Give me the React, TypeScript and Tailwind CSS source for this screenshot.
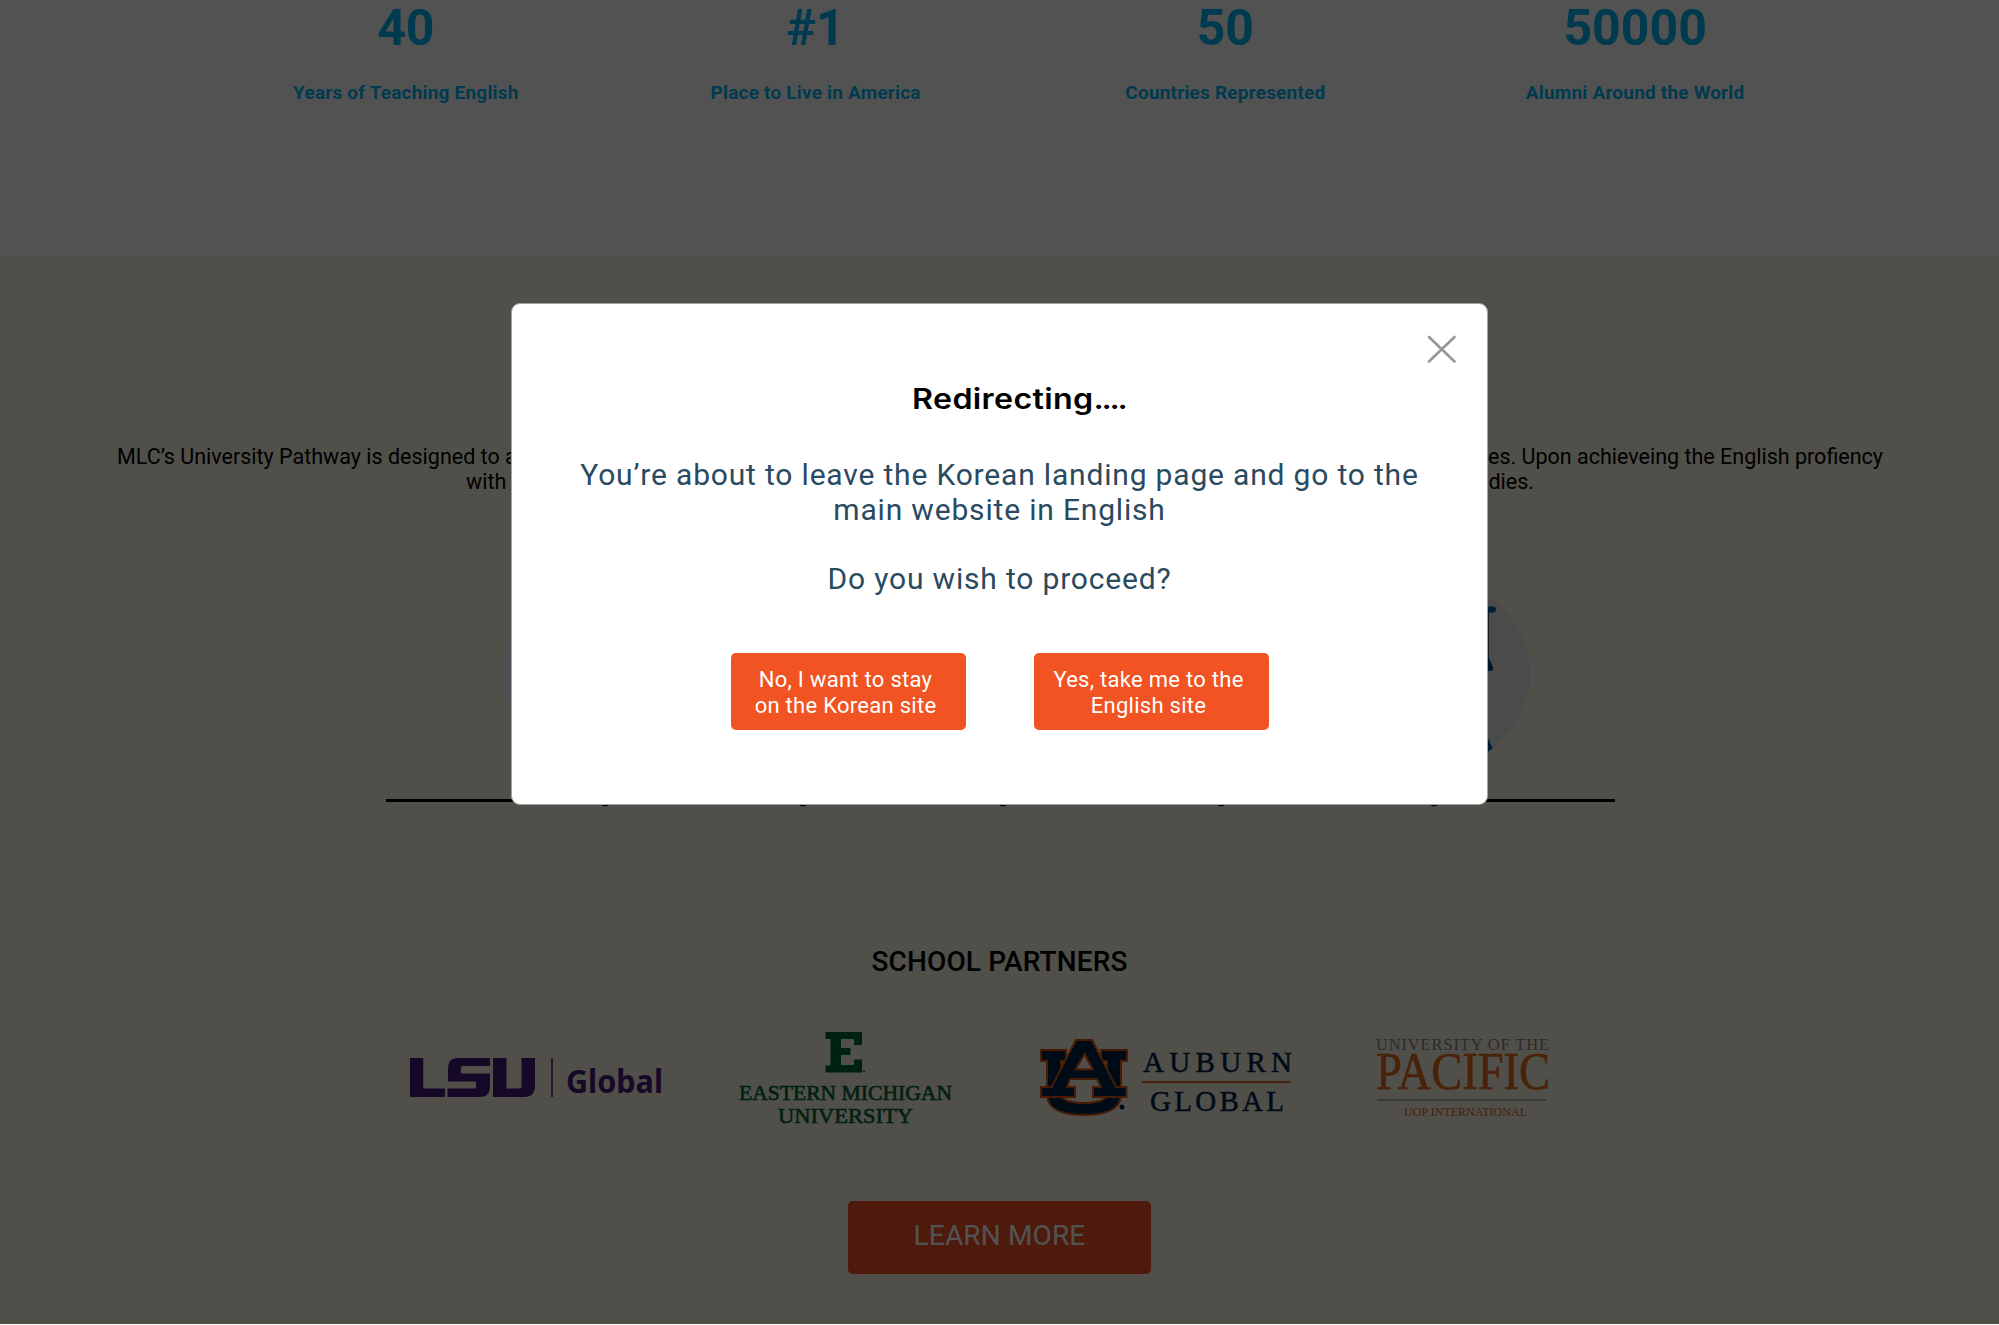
import React from "react";

const stats = [
  { value: "40", label: "Years of Teaching English" },
  { value: "#1", label: "Place to Live in America" },
  { value: "50", label: "Countries Represented" },
  { value: "50000", label: "Alumni Around the World" },
];

function Stats() {
  return (
    <section className="h-[257px] bg-white pl-[201px]">
      <div className="grid w-[1639px] grid-cols-4 text-center font-bold text-[#00b5f5]">
        {stats.map((s) => (
          <div key={s.label}>
            <div className="h-[56px] text-[50px] leading-[56px]">{s.value}</div>
            <div className="mt-[25px] text-[19px] leading-[24px] tracking-[0.2px]">{s.label}</div>
          </div>
        ))}
      </div>
    </section>
  );
}

function Intro() {
  return (
    <div className="flex flex-col items-center text-[21.5px] leading-[25px] text-black">
      <div className="ml-px flex w-[1766px] justify-between whitespace-nowrap">
        <span>MLC’s University Pathway is designed to a</span>
        <span>tes. Upon achieveing the English profiency</span>
      </div>
      <div className="ml-px flex w-[1068px] justify-between">
        <span>with</span>
        <span>dies.</span>
      </div>
    </div>
  );
}

function Steps() {
  return (
    <div className="ml-[386px] w-[1229px]">
      <div className="flex justify-between pl-[116px] pr-[85px]">
        <div className="size-[186px] rounded-full bg-[#f7f7ff]" />
        <div className="size-[186px] overflow-hidden rounded-full bg-[#e8e9ea]">
          <svg viewBox="0 0 186 186" className="size-full" fill="none">
            <path d="M90 28.5H149" stroke="#00629b" strokeWidth="6" strokeLinecap="round" />
            <path d="M143.5 30V84" stroke="#00304d" strokeWidth="2.500" />
            <path d="M142 71L149 86Q150 90 146 90H138Z" fill="#004a80" />
            <path d="M142 153L149 168L140 175Z" fill="#00629b" />
          </svg>
        </div>
      </div>
      <div className="mt-[32px] h-[3px] bg-black" />
      <div className="relative h-[5px]">
        {/* descenders of the step captions */}
        <svg className="absolute left-0 top-0" width="1229" height="5" fill="#000">
          {[219, 417, 617, 835, 1048].map((x) => (
            <ellipse key={x} cx={x} cy={2} rx={3.5} ry={2.3} />
          ))}
        </svg>
      </div>
    </div>
  );
}

function LsuLogo() {
  return (
    <svg width="256" height="41" viewBox="409 1057 256 41" fill="#461d7c">
      <path d="M410 1058H423.3V1088.5H445V1097H410Z" />
      <path d="M457 1058H490V1066H462Q461 1066 461 1068V1072.5Q461 1073.5 462 1073.5H490V1086Q490 1097 480 1097H447.500V1088.500H475Q476 1088.500 476 1087.500V1082.500Q476 1081.500 475 1081.500H448V1069Q448 1058 457 1058Z" />
      <path d="M493 1058H506.500V1088.500H519Q521.500 1088.500 521.500 1086V1058H535V1086Q535 1097 524 1097H493Z" />
      <path d="M551.2 1058H552.800V1097H551.200Z" />
      <text x="566" y="1092.500" fontFamily="'Noto Sans', sans-serif" fontWeight="700" fontSize="33" textLength="97" lengthAdjust="spacingAndGlyphs">Global</text>
    </svg>
  );
}

function EasternMichiganLogo() {
  return (
    <svg width="216" height="96" viewBox="737 1030 216 96" fill="#006633">
      <path d="M825.500 1032H862V1045H854V1039H841V1048H850.500V1055H841V1065H854V1059.500H862V1072.500H825.500V1065.500H830.500V1039H825.500Z" />
      <path d="M863 1070.500h2v1.500h-2z" />
      <g fontFamily="'Liberation Serif', serif" fontSize="21" stroke="#006633" strokeWidth="0.6">
        <text x="739" y="1099.500" textLength="213" lengthAdjust="spacingAndGlyphs">EASTERN MICHIGAN</text>
        <text x="778" y="1122.800" textLength="135" lengthAdjust="spacingAndGlyphs">UNIVERSITY</text>
      </g>
    </svg>
  );
}

function AuburnLogo() {
  return (
    <svg width="254" height="80" viewBox="1039 1037 254 80">
      <g fill="#03244d" stroke="#dd550c" strokeWidth="2" strokeLinejoin="miter">
        <path d="M1041 1050H1066V1061H1061V1096Q1065 1103 1084 1103Q1103 1103 1107 1096V1061H1101V1050H1127V1061H1121V1096Q1119 1115 1084 1115Q1049 1115 1047 1096V1061H1041Z" />
        <path fillRule="evenodd" d="M1076 1040H1092L1116 1087H1126.500V1097H1093V1087H1101L1097 1079H1070L1067 1087H1075V1097H1041V1087H1051.500ZM1084.500 1054L1075.500 1069.500H1093Z" />
      </g>
      <circle cx="1122" cy="1107" r="2.500" fill="#03244d" />
      <path d="M1142 1081.200H1291V1083H1142Z" fill="#dd550c" />
      <g fill="#03244d" fontFamily="'Liberation Serif', serif" fontSize="29" stroke="#03244d" strokeWidth="0.5">
        <text x="1143" y="1071.500" textLength="149">AUBURN</text>
        <text x="1150" y="1110.500" textLength="134">GLOBAL</text>
      </g>
    </svg>
  );
}

function PacificLogo() {
  return (
    <svg width="176" height="84" viewBox="1375 1035 176 84" fontFamily="'Liberation Serif', serif">
      <text x="1376" y="1049.500" fontSize="16.500" fill="#858585" textLength="173">UNIVERSITY OF THE</text>
      <text x="1376" y="1088.700" fontSize="52" fill="#e56a1e" stroke="#e56a1e" strokeWidth="0.6" textLength="174" lengthAdjust="spacingAndGlyphs">PACIFIC</text>
      <path d="M1377 1099.200H1546V1100.500H1377Z" fill="#8a8a8a" />
      <text x="1404" y="1116" fontSize="13.500" fill="#e56a1e" textLength="123" lengthAdjust="spacingAndGlyphs">UOP INTERNATIONAL</text>
    </svg>
  );
}

function Pathway() {
  return (
    <section className="h-[1067px] bg-[#f7f4e4] pt-[187px]">
      <Intro />
      <div className="mt-[87px]">
        <Steps />
      </div>
      <h2 className="mt-[138px] text-center text-[28px] font-medium leading-[34px] tracking-[0.13px] text-black">
        SCHOOL PARTNERS
      </h2>
      <div className="mt-[51px] flex h-[96px] pl-[409px]">
        <div className="mt-[27px]"><LsuLogo /></div>
        <div className="ml-[72px]"><EasternMichiganLogo /></div>
        <div className="ml-[86px] mt-[7px]"><AuburnLogo /></div>
        <div className="ml-[82px] mt-[5px]"><PacificLogo /></div>
      </div>
      <button className="mx-auto mt-[75px] block h-[73px] w-[303px] rounded-[5px] bg-[#f05323] pb-[4px] text-[28px] leading-[69px] tracking-[0.15px] text-white">
        LEARN MORE
      </button>
    </section>
  );
}

function ConfirmButton({ children }: { children: React.ReactNode }) {
  return (
    <button className="h-[77px] w-[235px] rounded-[5px] bg-[#f15323] pr-[6px] pt-[3px] text-center text-[22px] leading-[26px] tracking-[0.28px] whitespace-nowrap text-white">
      {children}
    </button>
  );
}

function RedirectDialog() {
  return (
    <div className="fixed inset-x-0 top-0 flex h-[1324px] items-start justify-center bg-black/68 pt-[303px]">
      <div role="dialog" className="relative h-[502px] w-[977px] rounded-[9px] border-[1.5px] border-[#a3a3a3] bg-white">
        <button aria-label="Close" className="absolute right-[29px] top-[30px]">
          <svg width="32" height="30" viewBox="0 0 32 30" stroke="#969696" strokeWidth="2.600" strokeLinecap="round">
            <path d="M3 3L28.500 27.500M28.500 3L3 27.500" />
          </svg>
        </button>
        <h1 className="ml-[39px] mt-[77px] text-center font-[Inter] text-[28px] font-semibold leading-[36px] text-black">
          <span className="inline-block scale-x-[1.15] tracking-[0.3px]">
            Redirecting<span className="tracking-[-2px]">....</span>
          </span>
        </h1>
        <p className="mt-[41px] text-center text-[30px] leading-[34.700px] tracking-[0.82px] text-[#2a4a5f]">
          You’re about to leave the Korean landing page and go to the
          <br />
          main website in English
          <br />
          <br />
          Do you wish to proceed?
        </p>
        <div className="mt-[56px] flex justify-center gap-[68px] pl-px">
          <ConfirmButton>No, I want to stay<br />on the Korean site</ConfirmButton>
          <ConfirmButton>Yes, take me to the<br />English site</ConfirmButton>
        </div>
      </div>
    </div>
  );
}

export default function App() {
  return (
    <div className="h-[1325px] w-[1999px] overflow-hidden bg-white font-[Roboto]">
      <Stats />
      <Pathway />
      <RedirectDialog />
    </div>
  );
}
